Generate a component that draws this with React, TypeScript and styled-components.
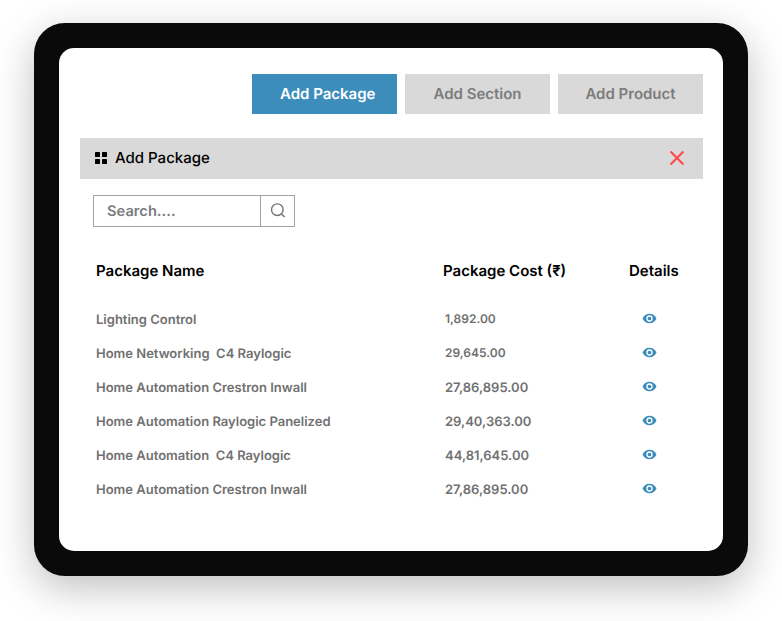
import React from "react";
import styled, { createGlobalStyle } from "styled-components";

const GlobalStyle = createGlobalStyle`
  * { box-sizing: border-box; }
  body { margin: 0; background: #fff; font-family: Inter, "Liberation Sans", sans-serif; text-rendering: geometricPrecision; }
  button, input { text-rendering: inherit; }
`;

const Page = styled.main`
  width: 782px;
  height: 621px;
  padding: 23px 34px 45px;
  overflow: hidden;
`;

const Device = styled.div`
  height: 553px;
  padding: 25px;
  border-radius: 31px;
  background: #0a0a0a;
  box-shadow: 0 12px 40px rgba(0, 0, 0, 0.25);
`;

const Screen = styled.div`
  height: 503px;
  padding: 26px 20px 0 21px;
  border-radius: 15px;
  background: #fff;
`;

const Actions = styled.nav`
  display: flex;
  justify-content: flex-end;
  gap: 8px;
`;

const ActionButton = styled.button<{ $active?: boolean }>`
  width: 145px;
  height: 40px;
  padding: 0;
  padding-left: ${(p) => (p.$active ? "6.5px" : "0")};
  border: 0;
  background: ${(p) => (p.$active ? "#3c8dbc" : "#d9d9d9")};
  color: ${(p) => (p.$active ? "#fff" : "#7c7c7c")};
  font: 600 15px/20px Inter, sans-serif;
`;

const TitleBar = styled.header`
  display: flex;
  align-items: center;
  height: 41px;
  margin-top: 24px;
  padding: 0 18px 1px 15px;
  background: #d9d9d9;
`;

const Title = styled.h1`
  flex: 1;
  margin: 0 0 0 8px;
  color: #000;
  font: 500 15px/20px Inter, sans-serif;
`;

const SearchBox = styled.div`
  display: flex;
  width: 202px;
  height: 32px;
  margin: 16px 0 0 13px;
  border: 1px solid #a3a3a3;
`;

const SearchInput = styled.input`
  width: 166px;
  padding: 0 13px;
  border: 0;
  outline: 0;
  background: transparent;
  font: 600 14.7px/20px Inter, sans-serif;
  &::placeholder { color: #7c7c7c; opacity: 1; }
`;

const SearchButton = styled.button`
  display: flex;
  align-items: center;
  justify-content: center;
  flex: 1;
  padding: 0;
  border: 0;
  border-left: 1px solid #a3a3a3;
  background: transparent;
`;

const Table = styled.section`
  margin: 31px 0 0 16px;
`;

const HeadRow = styled.div`
  display: grid;
  grid-template-columns: 347px 186px 1fr;
  height: 24px;
  margin-bottom: 21px;
  align-items: center;
  color: #000;
  font-size: 15px;
  font-weight: 600;
`;

const Row = styled.div`
  display: grid;
  grid-template-columns: 349px 196px 1fr;
  height: 34px;
  align-items: center;
  color: #707070;
  font-size: 13px;
  font-weight: 600;
  white-space: pre;
`;

const Cost = styled.span<{ $compact?: boolean }>`
  padding-bottom: ${(p) => (p.$compact ? "3px" : "0")};
  font-size: ${(p) => (p.$compact ? "12px" : "13px")};
`;

const DetailButton = styled.button`
  display: flex;
  width: 17px;
  height: 14px;
  margin-top: -4px;
  padding: 0;
  border: 0;
  background: none;
`;

const GridIcon = () => (
  <svg width="12" height="12" viewBox="0 0 12 12">
    <rect width="5" height="5" rx=".4" />
    <rect x="7" width="5" height="5" rx=".4" />
    <rect y="7" width="5" height="5" rx=".4" />
    <rect x="7" y="7" width="5" height="5" rx=".4" />
  </svg>
);

const CloseIcon = () => (
  <svg width="16" height="16" viewBox="0 0 16 16" fill="none" stroke="#ff4848" strokeWidth="2.1">
    <path d="M1.6 1.6 14.4 14.4M14.4 1.6 1.6 14.4" />
  </svg>
);

const SearchIcon = () => (
  <svg width="16" height="16" viewBox="0 0 16 16" fill="none" stroke="#747474" strokeWidth="1.4">
    <circle cx="7.3" cy="6.7" r="5.8" />
    <path d="m11.4 10.9 3.3 3.2" />
  </svg>
);

const EyeIcon = () => (
  <svg width="17" height="14" viewBox="0 0 17 14">
    <path d="M1.5 7.5C2.7 4.5 5.5 2.8 8.5 2.8S14.3 4.5 15.5 7.5c-1.2 3-4 4.7-7 4.7S2.7 10.5 1.5 7.5Z" fill="#3c8dbc" />
    <circle cx="8.5" cy="7.5" r="2.5" fill="#3c8dbc" stroke="#fff" strokeWidth="1.3" />
  </svg>
);

const packages = [
  { name: "Lighting Control", cost: "1,892.00", compact: true },
  { name: "Home Networking  C4 Raylogic", cost: "29,645.00", compact: true },
  { name: "Home Automation Crestron Inwall", cost: "27,86,895.00" },
  { name: "Home Automation Raylogic Panelized", cost: "29,40,363.00" },
  { name: "Home Automation  C4 Raylogic", cost: "44,81,645.00" },
  { name: "Home Automation Crestron Inwall", cost: "27,86,895.00" },
];

export default function App() {
  return (
    <Page>
      <GlobalStyle />
      <Device>
        <Screen>
          <Actions>
            <ActionButton $active>Add Package</ActionButton>
            <ActionButton>Add Section</ActionButton>
            <ActionButton>Add Product</ActionButton>
          </Actions>
          <TitleBar>
            <GridIcon />
            <Title>Add Package</Title>
            <CloseIcon />
          </TitleBar>
          <SearchBox>
            <SearchInput placeholder="Search...." />
            <SearchButton aria-label="Search"><SearchIcon /></SearchButton>
          </SearchBox>
          <Table>
            <HeadRow>
              <span>Package Name</span>
              <span>Package Cost (₹)</span>
              <span>Details</span>
            </HeadRow>
            {packages.map((item, index) => (
              <Row key={index}>
                <span>{item.name}</span>
                <Cost $compact={item.compact}>{item.cost}</Cost>
                <DetailButton aria-label="Details"><EyeIcon /></DetailButton>
              </Row>
            ))}
          </Table>
        </Screen>
      </Device>
    </Page>
  );
}
